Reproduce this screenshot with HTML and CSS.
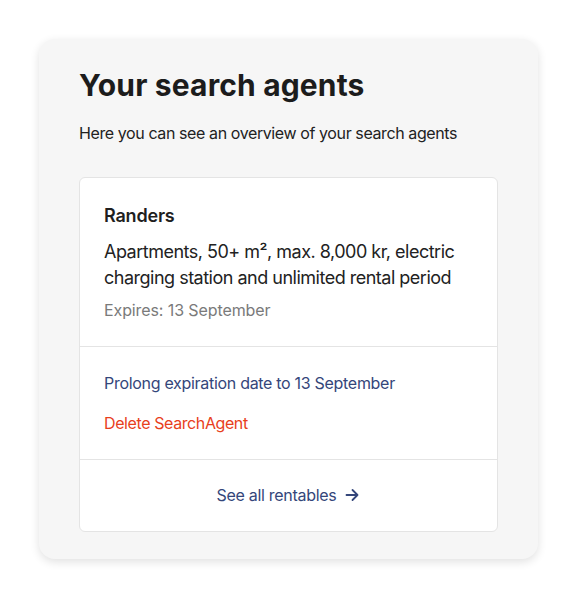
FILE: index.html
```html
<!DOCTYPE html>
<html lang="en">
<head>
    <meta charset="UTF-8">
    <meta name="viewport" content="width=device-width, initial-scale=1.0">
    <title>Your search agents</title>
    <link rel="stylesheet" href="styles.css">
</head>
<body>
    <div class="panel">
        <h1>Your search agents</h1>
        <p class="intro">Here you can see an overview of your search agents</p>

        <div class="agent">
            <div class="agent-info">
                <h2>Randers</h2>
                <p class="criteria">Apartments, 50+ m², max. 8,000 kr, electric charging station and unlimited rental period</p>
                <p class="expires">Expires: 13 September</p>
            </div>
            <div class="agent-actions">
                <a href="#" class="prolong">Prolong expiration date to 13 September</a>
                <a href="#" class="delete">Delete SearchAgent</a>
            </div>
            <div class="agent-footer">
                <a href="#" class="see-all">See all rentables
                    <svg width="16" height="16" viewBox="0 0 16 16" fill="none" stroke="currentColor" stroke-width="1.8" stroke-linecap="round" stroke-linejoin="round"><path d="M2.5 8h11M8.5 3l5 5-5 5"/></svg>
                </a>
            </div>
        </div>
    </div>
</body>
</html>
```

FILE: styles.css
```css
body {
    margin: 0;
    padding: 39px;
    background-color: #ffffff;
    color: #1f1f1f;
    font-family: Inter, "Noto Sans", sans-serif;
}
.panel {
    background-color: #f6f6f6;
    border-radius: 16px;
    box-shadow: 0 3px 10px rgba(0, 0, 0, 0.12);
    padding: 28px 40px 27px;
}
h1 {
    font-size: 30px;
    line-height: 36px;
    font-weight: 700;
    letter-spacing: 0.15px;
    margin: 0 0 18px;
    color: #1c1c1c;
}
.intro {
    font-size: 16px;
    line-height: 24px;
    letter-spacing: -0.4px;
    margin: 0 0 32px;
    color: #222;
}
.agent {
    background-color: #ffffff;
    border: 1px solid #e4e4e4;
    border-radius: 6px;
}
.agent-info {
    padding: 24px 24px 24px;
    border-bottom: 1px solid #e4e4e4;
}
.agent-info h2 {
    font-size: 18px;
    line-height: 28px;
    font-weight: 600;
    letter-spacing: -0.2px;
    margin: 0 0 9px;
}
.criteria {
    font-size: 18px;
    line-height: 26px;
    letter-spacing: -0.5px;
    margin: 0 0 7px;
    color: #222;
}
.expires {
    font-size: 16px;
    line-height: 24px;
    letter-spacing: -0.1px;
    margin: 0;
    color: #7a7a7a;
}
.agent-actions {
    display: flex;
    flex-direction: column;
    gap: 16px;
    padding: 24px 24px 24px;
    border-bottom: 1px solid #e4e4e4;
}
.agent-actions a {
    font-size: 16px;
    line-height: 24px;
    text-decoration: none;
}
.prolong {
    color: #34467a;
    letter-spacing: -0.3px;
}
.delete {
    color: #e8401c;
    letter-spacing: -0.4px;
}
.agent-footer {
    display: flex;
    justify-content: center;
    padding: 23px 24px 24px;
}
.see-all {
    display: flex;
    align-items: center;
    gap: 8px;
    font-size: 16px;
    line-height: 24px;
    letter-spacing: -0.3px;
    color: #34467a;
    text-decoration: none;
}
```
